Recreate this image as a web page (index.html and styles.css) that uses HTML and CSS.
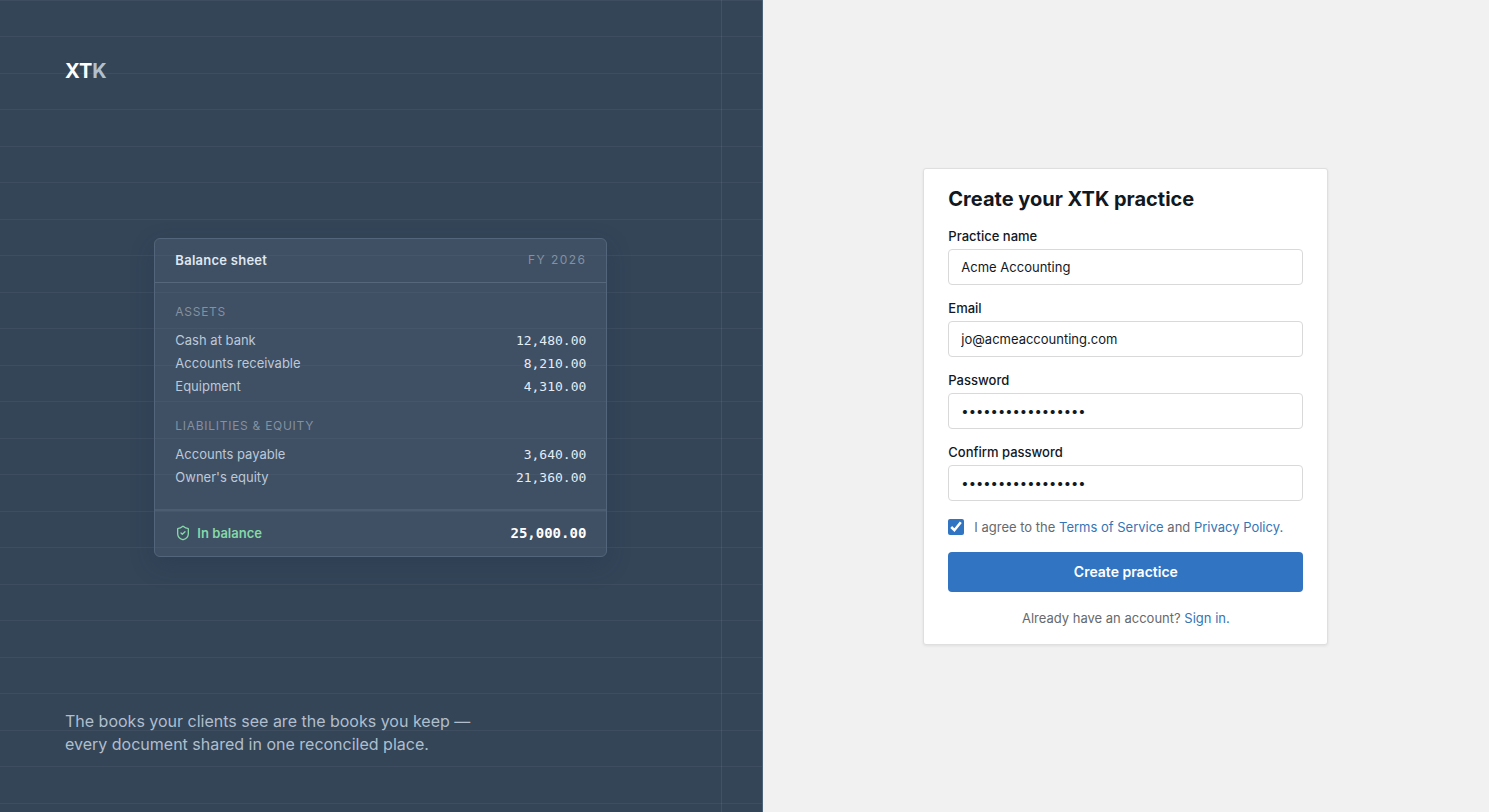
FILE: index.html
```html
<!DOCTYPE html>
<html lang="en">

<head>
    <meta charset="UTF-8">
    <meta name="viewport" content="width=device-width, initial-scale=1.0">
    <title>Create your XTK practice</title>
    <link rel="stylesheet" href="styles.css">
</head>

<body>
    <div class="page">
        <!-- brand side -->
        <section class="brand">
            <div class="logo">XT<span>K</span></div>

            <div class="sheet">
                <div class="sheet-head">
                    <h2>Balance sheet</h2>
                    <span class="year">FY 2026</span>
                </div>
                <div class="sheet-body">
                    <table>
                        <caption>Assets</caption>
                        <tr>
                            <td>Cash at bank</td>
                            <td class="num">12,480.00</td>
                        </tr>
                        <tr>
                            <td>Accounts receivable</td>
                            <td class="num">8,210.00</td>
                        </tr>
                        <tr>
                            <td>Equipment</td>
                            <td class="num">4,310.00</td>
                        </tr>
                    </table>
                    <table>
                        <caption>Liabilities &amp; equity</caption>
                        <tr>
                            <td>Accounts payable</td>
                            <td class="num">3,640.00</td>
                        </tr>
                        <tr>
                            <td>Owner's equity</td>
                            <td class="num">21,360.00</td>
                        </tr>
                    </table>
                </div>
                <div class="sheet-foot">
                    <span class="balance">
                        <svg width="16" height="16" viewBox="0 0 24 24" fill="none" stroke="currentColor" stroke-width="2" stroke-linecap="round" stroke-linejoin="round">
                            <path d="M20 13c0 5-3.5 7.5-7.66 8.95a1 1 0 0 1-.67-.01C7.5 20.5 4 18 4 13V6a1 1 0 0 1 1-1c2 0 4.5-1.2 6.24-2.72a1.17 1.17 0 0 1 1.52 0C14.51 3.81 17 5 19 5a1 1 0 0 1 1 1z" />
                            <path d="m9 12 2 2 4-4" />
                        </svg>
                        In balance
                    </span>
                    <span class="total">25,000.00</span>
                </div>
            </div>

            <p class="tagline">The books your clients see are the books you keep — every document shared in one reconciled place.</p>
        </section>

        <!-- sign up side -->
        <main class="signup">
            <form class="card">
                <h1>Create your XTK practice</h1>
                <div class="field">
                    <label for="practice">Practice name</label>
                    <input type="text" id="practice" value="Acme Accounting">
                </div>
                <div class="field">
                    <label for="email">Email</label>
                    <input type="email" id="email" value="jo@acmeaccounting.com">
                </div>
                <div class="field">
                    <label for="password">Password</label>
                    <input type="password" id="password" value="ledger-books-2026">
                </div>
                <div class="field">
                    <label for="confirm">Confirm password</label>
                    <input type="password" id="confirm" value="ledger-books-2026">
                </div>
                <div class="agree">
                    <input type="checkbox" id="agree" checked>
                    <label for="agree">I agree to the <a href="#">Terms of Service</a> and <a href="#">Privacy Policy.</a></label>
                </div>
                <button type="submit">Create practice</button>
                <p class="signin">Already have an account? <a href="#">Sign in.</a></p>
            </form>
        </main>
    </div>
</body>

</html>
```
FILE: styles.css
```css
* {
    box-sizing: border-box;
}

body {
    margin: 0;
    background: #f1f1f1;
    color: #11181f;
    font-family: Inter, "Liberation Sans", sans-serif;
    font-size: 13px;
    line-height: 20px;
}

h1,
h2,
p {
    margin: 0;
}

a {
    color: #3575b5;
    text-decoration: none;
}

.page {
    display: grid;
    grid-template-columns: 1.05fr 1fr;
    min-height: 100vh;
}

/* ledger paper: margin line on the right, ruled lines across */
.brand {
    display: flex;
    flex-direction: column;
    justify-content: space-between;
    padding: 57px 65px 56px;
    border-right: 1px solid #4b6478;
    background:
        linear-gradient(rgba(255, 255, 255, 0.07), rgba(255, 255, 255, 0.07)) right 40px top / 1px 100% no-repeat,
        repeating-linear-gradient(rgba(255, 255, 255, 0.05) 0 1px, transparent 1px 36px, rgba(255, 255, 255, 0.05) 36px 37px, transparent 37px 73px),
        #344558;
}

.logo {
    color: #fff;
    font-size: 20px;
    font-weight: 700;
    line-height: 28px;
}

.logo span {
    color: #b2c0ce;
}

.sheet {
    align-self: center;
    width: 100%;
    max-width: 453px;
    border: 1px solid #53657a;
    border-radius: 6px;
    background: rgba(88, 104, 128, 0.32);
    box-shadow: 0 8px 24px rgba(30, 41, 70, 0.24);
}

.sheet-head,
.sheet-foot {
    display: flex;
    align-items: center;
    justify-content: space-between;
    padding: 0 20px 1px;
}

.sheet-head {
    height: 44px;
    border-bottom: 1px solid #56677c;
}

.sheet-head h2 {
    color: #dfe7f0;
    font-size: 13px;
    font-weight: 600;
    letter-spacing: 0.02em;
}

.year {
    color: #8391a1;
    font-size: 12px;
    letter-spacing: 0.12em;
}

.sheet-body {
    display: flex;
    flex-direction: column;
    gap: 20px;
    padding: 21px 20px 20px;
}

table {
    width: 100%;
    border-collapse: collapse;
}

caption {
    padding-bottom: 9px;
    color: #8391a1;
    font-size: 12px;
    line-height: 16px;
    letter-spacing: 0.06em;
    text-align: left;
    text-transform: uppercase;
}

td {
    padding: 0;
    color: #bcc9d8;
    line-height: 23px;
}

.num,
.total {
    font-family: "DejaVu Sans Mono", monospace;
    text-align: right;
}

.num {
    color: #e4ecf4;
}

.sheet-foot {
    height: 47px;
    border-top: 2px solid #4c5d72;
}

.balance {
    display: flex;
    align-items: center;
    gap: 6px;
    color: #86d8a8;
    font-weight: 600;
}

.total {
    color: #fff;
    font-size: 14px;
    font-weight: 700;
}

.tagline {
    max-width: 420px;
    color: #b0becd;
    font-size: 16px;
    line-height: 23px;
}

.signup {
    display: flex;
    align-items: center;
    justify-content: center;
    padding: 24px;
}

.card {
    display: flex;
    flex-direction: column;
    width: 100%;
    max-width: 405px;
    padding: 16px 24px;
    border: 1px solid #dfdfdf;
    border-radius: 3px;
    background: #fff;
    box-shadow: 0 1px 3px rgba(0, 0, 0, 0.08);
}

.card h1 {
    margin-bottom: 13px;
    font-size: 20px;
    font-weight: 700;
    line-height: 28px;
}

.field {
    display: flex;
    flex-direction: column;
    gap: 3px;
    margin-bottom: 13px;
}

.field label {
    font-weight: 500;
}

.field input {
    width: 100%;
    height: 36px;
    padding: 0 12px;
    border: 1px solid #d9d9d9;
    border-radius: 4px;
    background: #fff;
    color: #11181f;
    font: inherit;
}

.agree {
    display: flex;
    align-items: center;
    gap: 10px;
    margin: 3px 0 15px;
    color: #66696d;
}

.agree input {
    width: 16px;
    height: 16px;
    margin: 0;
    accent-color: #3074c2;
}

button {
    height: 40px;
    border: 0;
    border-radius: 4px;
    background: #3074c2;
    color: #fff;
    font: inherit;
    font-size: 14px;
    font-weight: 600;
}

.signin {
    margin-top: 16px;
    color: #66696d;
    text-align: center;
}
```
